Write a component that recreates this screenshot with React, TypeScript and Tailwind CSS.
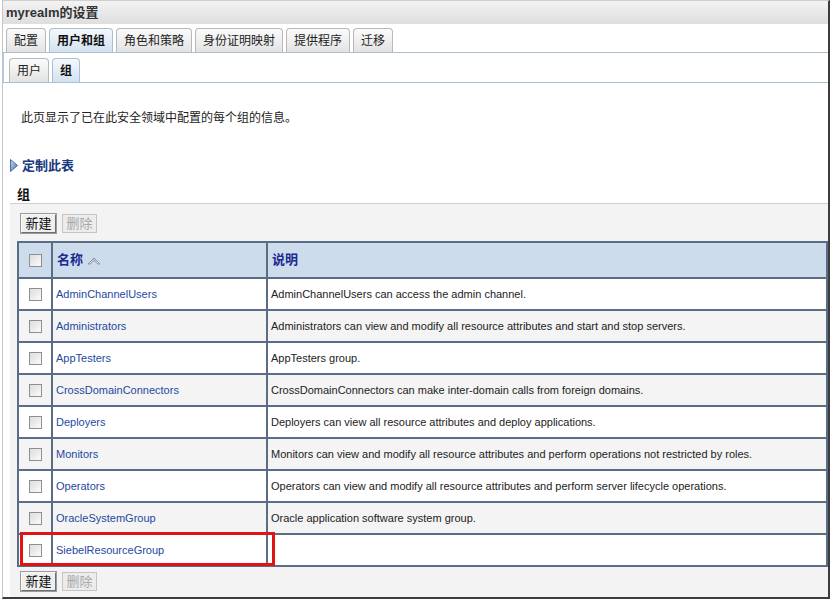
const font = { fontFamily: '"Liberation Sans", "Noto Sans CJK SC", sans-serif' };

const groups: [string, string][] = [
  ['AdminChannelUsers', 'AdminChannelUsers can access the admin channel.'],
  ['Administrators', 'Administrators can view and modify all resource attributes and start and stop servers.'],
  ['AppTesters', 'AppTesters group.'],
  ['CrossDomainConnectors', 'CrossDomainConnectors can make inter-domain calls from foreign domains.'],
  ['Deployers', 'Deployers can view all resource attributes and deploy applications.'],
  ['Monitors', 'Monitors can view and modify all resource attributes and perform operations not restricted by roles.'],
  ['Operators', 'Operators can view and modify all resource attributes and perform server lifecycle operations.'],
  ['OracleSystemGroup', 'Oracle application software system group.'],
  ['SiebelResourceGroup', ''],
];

function Tab({ label, active }: { label: string; active?: boolean }) {
  return (
    <div
      className={
        active
          ? 'h-[24px] px-[7px] flex items-center rounded-t-[4px] border border-b-0 border-[#a9bfd4] bg-gradient-to-b from-[#f4f8fc] to-[#d3e2f0] text-[12px] font-bold text-[#111]'
          : 'h-[24px] px-[7px] flex items-center rounded-t-[4px] border border-b-0 border-[#b8b8b8] bg-gradient-to-b from-[#fbfbfb] to-[#e3e3e3] text-[12px] text-[#222]'
      }
    >
      {label}
    </div>
  );
}

function Checkbox() {
  return <div className="mx-auto w-[13px] h-[13px] border border-[#8e8f8f] bg-gradient-to-br from-[#dcdcdc] to-[#fbfbfb]" />;
}

function Buttons() {
  return (
    <div className="flex gap-[6px]">
      <button className="h-[19px] w-[35px] flex items-center justify-center text-[13px] text-[#111] bg-[#efefef] border border-t-[#f8f8f8] border-l-[#f8f8f8] border-r-[#6e6e6e] border-b-[#6e6e6e] outline outline-1 outline-[#9a9a9a]">
        新建
      </button>
      <button className="h-[19px] w-[35px] flex items-center justify-center text-[13px] text-[#a8a8a8] bg-[#ececec] border border-[#c4c4c4]">
        删除
      </button>
    </div>
  );
}

export default function App() {
  return (
    <div className="w-[831px] h-[601px] bg-white overflow-hidden" style={font}>
      <div className="ml-[2px] w-[828px] h-[599px] flex flex-col border-l border-t border-l-[#c4c4c4] border-t-[#cfcfcf] border-r-2 border-b-2 border-r-[#3c3c3c] border-b-[#3c3c3c]">
        {/* title */}
        <div className="h-[23px] flex items-center pl-[3px] bg-gradient-to-b from-[#f3f3f3] to-[#dedede] text-[13px] font-bold text-[#333]">
          myrealm的设置
        </div>

        {/* main tabs */}
        <div className="mt-[4px] pl-[3px] flex items-end gap-[3px] border-b border-[#a9c0d0]">
          <Tab label="配置" />
          <Tab label="用户和组" active />
          <Tab label="角色和策略" />
          <Tab label="身份证明映射" />
          <Tab label="提供程序" />
          <Tab label="迁移" />
        </div>

        {/* sub tabs */}
        <div className="h-[30px] pl-[5px] flex items-end gap-[3px] border-l-2 border-b border-l-[#b3c8dc] border-b-[#a9c0d0] -ml-[1px]">
          <Tab label="用户" />
          <Tab label="组" active />
        </div>

        <p className="mt-[27px] pl-[18px] text-[12px] leading-[16px] text-[#222]">此页显示了已在此安全领域中配置的每个组的信息。</p>

        <div className="mt-[31px] pl-[7px] flex items-center gap-[4px] h-[17px]">
          <svg width="8" height="13" viewBox="0 0 8 13">
            <defs>
              <linearGradient id="tri" x1="0" y1="0" x2="1" y2="1">
                <stop offset="0" stopColor="#c9dcf4" />
                <stop offset="1" stopColor="#3d6fb5" />
              </linearGradient>
            </defs>
            <path d="M0.5 0.5 L7.5 6.5 L0.5 12.5 Z" fill="url(#tri)" stroke="#4a6fa3" strokeWidth="1" />
          </svg>
          <span className="text-[13px] font-bold text-[#173a80]">定制此表</span>
        </div>

        <div className="mt-[12px] pl-[14px] h-[17px] flex items-center text-[13px] font-bold text-[#111]">组</div>

        {/* panel */}
        <div className="ml-[7px] flex-1 bg-[#f3f3f3] border-t border-[#cfcfcf] pl-[7px] pt-[10px]">
          <div className="pl-[4px]">
            <Buttons />
          </div>
          <div className="relative mt-[8px]">
            <table className="w-full table-fixed border-collapse">
              <colgroup>
                <col className="w-[34px]" />
                <col className="w-[215px]" />
                <col />
              </colgroup>
              <thead>
                <tr className="h-[36px] bg-[#cddced]">
                  <th className="border-2 border-[#5a6d84] p-0">
                    <Checkbox />
                  </th>
                  <th className="border-2 border-[#5a6d84] px-[4px] text-left">
                    <div className="flex items-center gap-[4px] text-[13px] font-bold text-[#1b2a8f]">
                      名称
                      <svg width="14" height="9" viewBox="0 0 14 9">
                        <path d="M1 8 L7 2 L13 8 L11 8 L7 4.5 L3 8 Z" fill="#eef2f7" stroke="#8a94a3" strokeWidth="1" strokeLinejoin="round" />
                        <path d="M4 5.5 L7 2.5 L10 5.5" fill="none" stroke="#8a94a3" strokeWidth="1" />
                      </svg>
                    </div>
                  </th>
                  <th className="border-2 border-[#5a6d84] px-[4px] text-left text-[13px] font-bold text-[#1b2a8f]">说明</th>
                </tr>
              </thead>
              <tbody>
                {groups.map(([name, desc], i) => (
                  <tr key={name} className={i % 2 === 0 ? 'h-[32px] bg-white' : 'h-[32px] bg-[#f4f4f4]'}>
                    <td className="border-2 border-[#5a6d84] p-0">
                      <Checkbox />
                    </td>
                    <td className="border-2 border-[#5a6d84] px-[3px] text-[11px] text-[#1f48a0]">{name}</td>
                    <td className="border-2 border-[#5a6d84] px-[3px] text-[11px] text-[#222] whitespace-nowrap">{desc}</td>
                  </tr>
                ))}
              </tbody>
            </table>
            <div className="absolute left-[3px] top-[291px] w-[255px] h-[34px] border-[3px] border-[#e01414]" />
          </div>
          <div className="mt-[5px] pl-[4px]">
            <Buttons />
          </div>
        </div>
      </div>
    </div>
  );
}
